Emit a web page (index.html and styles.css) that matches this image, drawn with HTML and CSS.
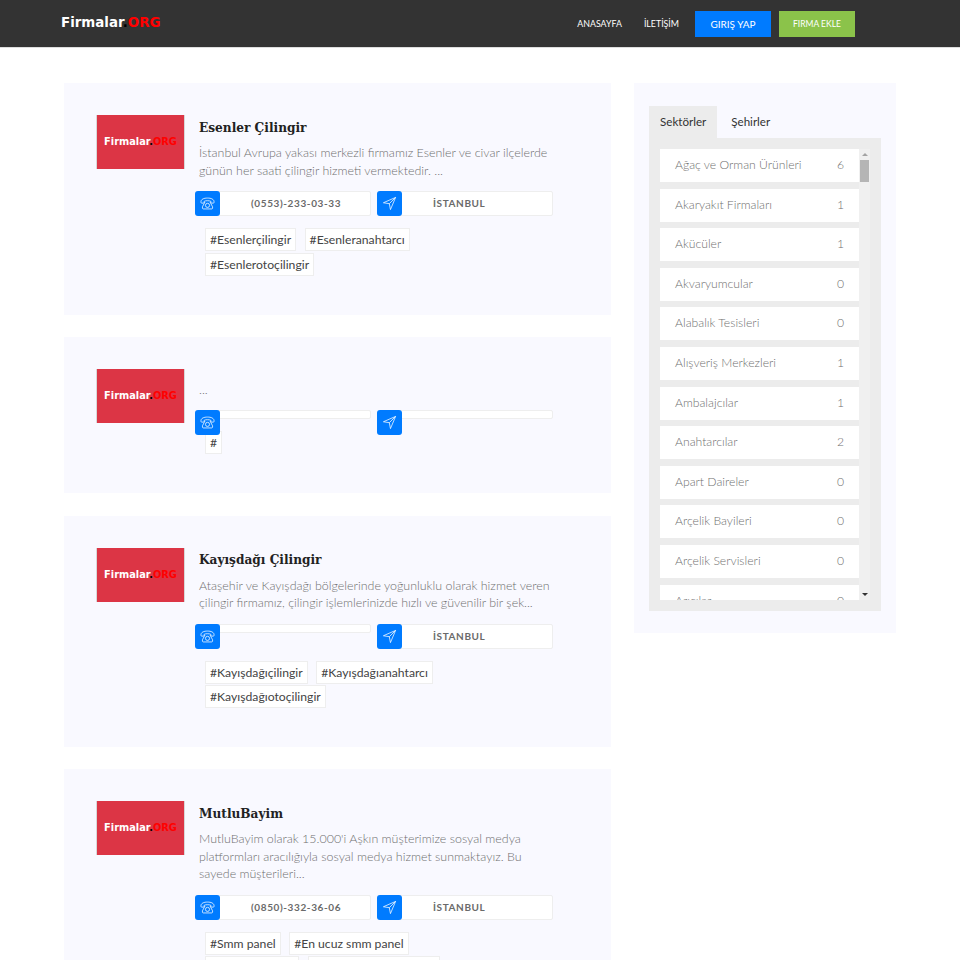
FILE: index.html
```html
<!DOCTYPE html>
<html>
<head>
    <meta charset="UTF-8">
    <title>Firmalar.ORG</title>
    <link rel="stylesheet" href="styles.css">
</head>
<body>
    <svg class="icon-defs" width="0" height="0">
        <symbol id="icon-phone" viewBox="0 0 16 16">
            <path d="M1 6.200C1 3.400 4.200 2.200 8 2.200s7 1.200 7 4v.6c0 .5-.4.8-.9.8h-1.600c-.5 0-.9-.3-.9-.8V5.700c-1-.5-2.300-.7-3.600-.7s-2.600.2-3.600.7v1.100c0 .5-.4.8-.9.8H1.900c-.5 0-.9-.3-.9-.8z"/>
            <path d="M5.300 6.400 2.600 11.500v1.300c0 .6.400 1 1 1h8.800c.6 0 1-.4 1-1v-1.300l-2.700-5.100"/>
            <circle cx="8" cy="10" r="2.200"/>
        </symbol>
        <symbol id="icon-nav" viewBox="0 0 16 16">
            <path d="M14.500 1.500 1.500 7.200l6.300 1 1.200 6.300z"/>
            <path d="M14.500 1.500 7.800 8.200"/>
        </symbol>
    </svg>

    <header class="topbar">
        <a class="brand">Firmalar<span class="dot">.</span><span class="org">ORG</span></a>
        <nav class="topnav">
            <a class="nav-link">ANASAYFA</a>
            <a class="nav-link">İLETİŞİM</a>
            <a class="nav-btn btn-blue">GIRIŞ YAP</a>
            <a class="nav-btn btn-green">FIRMA EKLE</a>
        </nav>
    </header>

    <main class="page">
        <section class="results">

            <!-- Esenler -->
            <article class="card">
                <div class="thumb">Firmalar<span class="dot">.</span><span class="org">ORG</span></div>
                <div class="card-body">
                    <h3 class="card-title">Esenler Çilingir</h3>
                    <p class="card-text">İstanbul Avrupa yakası merkezli firmamız Esenler ve civar ilçelerde günün her saati çilingir hizmeti vermektedir. ...</p>
                    <div class="info-row">
                        <div class="info"><svg class="info-icon"><use href="#icon-phone"/></svg>(0553)-233-03-33</div>
                        <div class="info"><svg class="info-icon"><use href="#icon-nav"/></svg>İSTANBUL</div>
                    </div>
                    <div class="tags">
                        <a class="tag">#Esenlerçilingir</a>
                        <a class="tag">#Esenleranahtarcı</a>
                        <a class="tag">#Esenlerotoçilingir</a>
                    </div>
                </div>
            </article>

            <!-- Bos kayit -->
            <article class="card">
                <div class="thumb">Firmalar<span class="dot">.</span><span class="org">ORG</span></div>
                <div class="card-body">
                    <h3 class="card-title"></h3>
                    <p class="card-text">...</p>
                    <div class="info-row">
                        <div class="info"><svg class="info-icon"><use href="#icon-phone"/></svg></div>
                        <div class="info"><svg class="info-icon"><use href="#icon-nav"/></svg></div>
                    </div>
                    <div class="tags">
                        <a class="tag">#</a>
                    </div>
                </div>
            </article>

            <!-- Kayisdagi -->
            <article class="card">
                <div class="thumb">Firmalar<span class="dot">.</span><span class="org">ORG</span></div>
                <div class="card-body">
                    <h3 class="card-title">Kayışdağı Çilingir</h3>
                    <p class="card-text">Ataşehir ve Kayışdağı bölgelerinde yoğunluklu olarak hizmet veren çilingir firmamız, çilingir işlemlerinizde hızlı ve güvenilir bir şek...</p>
                    <div class="info-row">
                        <div class="info"><svg class="info-icon"><use href="#icon-phone"/></svg></div>
                        <div class="info"><svg class="info-icon"><use href="#icon-nav"/></svg>İSTANBUL</div>
                    </div>
                    <div class="tags">
                        <a class="tag">#Kayışdağıçilingir</a>
                        <a class="tag">#Kayışdağıanahtarcı</a>
                        <a class="tag">#Kayışdağıotoçilingir</a>
                    </div>
                </div>
            </article>

            <!-- MutluBayim -->
            <article class="card">
                <div class="thumb">Firmalar<span class="dot">.</span><span class="org">ORG</span></div>
                <div class="card-body">
                    <h3 class="card-title">MutluBayim</h3>
                    <p class="card-text">MutluBayim olarak 15.000'i Aşkın müşterimize sosyal medya platformları aracılığıyla sosyal medya hizmet sunmaktayız. Bu sayede müşterileri...</p>
                    <div class="info-row">
                        <div class="info"><svg class="info-icon"><use href="#icon-phone"/></svg>(0850)-332-36-06</div>
                        <div class="info"><svg class="info-icon"><use href="#icon-nav"/></svg>İSTANBUL</div>
                    </div>
                    <div class="tags">
                        <a class="tag">#Smm panel</a>
                        <a class="tag">#En ucuz smm panel</a>
                        <a class="tag">#Takipçi satın al</a>
                        <a class="tag">#Sosyal medya hizmeti</a>
                    </div>
                </div>
            </article>
        </section>

        <aside class="sidebar">
            <div class="tabs">
                <a class="tab active">Sektörler</a>
                <a class="tab">Şehirler</a>
            </div>
            <div class="tab-panel">
                <ul class="sector-list">
                    <li class="sector">Ağaç ve Orman Ürünleri<span>6</span></li>
                    <li class="sector">Akaryakıt Firmaları<span>1</span></li>
                    <li class="sector">Akücüler<span>1</span></li>
                    <li class="sector">Akvaryumcular<span>0</span></li>
                    <li class="sector">Alabalık Tesisleri<span>0</span></li>
                    <li class="sector">Alışveriş Merkezleri<span>1</span></li>
                    <li class="sector">Ambalajcılar<span>1</span></li>
                    <li class="sector">Anahtarcılar<span>2</span></li>
                    <li class="sector">Apart Daireler<span>0</span></li>
                    <li class="sector">Arçelik Bayileri<span>0</span></li>
                    <li class="sector">Arçelik Servisleri<span>0</span></li>
                    <li class="sector">Arıcılar<span>0</span></li>
                </ul>
                <div class="scrollbar">
                    <span class="arrow arrow-up"></span>
                    <span class="thumb-bar"></span>
                    <span class="arrow arrow-down"></span>
                </div>
            </div>
        </aside>
    </main>
</body>
</html>
```

FILE: styles.css
```css
* {
    box-sizing: border-box;
}

html, body {
    height: 960px;
    overflow: hidden;
}

body {
    margin: 0;
    font-family: Lato, Arial, sans-serif;
    font-weight: 300;
    color: #777;
    background-color: #fff;
}

.icon-defs {
    position: absolute;
}

/* Ust menu */
.topbar {
    height: 48px;
    display: flex;
    justify-content: space-between;
    padding: 11px 105px 0 61px;
    background-color: #333;
    border-bottom: 1px solid #ddd;
}

.brand {
    font-family: "DejaVu Sans", sans-serif;
    font-weight: bold;
    font-size: 13.4px;
    line-height: 24px;
    color: #fff;
}

.dot { color: #000; }
.org { color: #f00; }

.topnav {
    display: flex;
    align-items: flex-start;
}

.nav-link {
    margin-right: 22px;
    font-size: 8.8px;
    font-weight: 400;
    line-height: 26px;
    color: #fff;
}

.nav-btn {
    width: 76px;
    height: 26px;
    font-size: 8.5px;
    font-weight: 400;
    line-height: 26px;
    text-align: center;
    color: #fff;
}

.btn-blue {
    background-color: #007bff;
    margin-left: -6px;
    margin-right: 8px;
    font-size: 10px;
}

.btn-green {
    background-color: #8bc34a;
}

/* Sayfa */
.page {
    display: flex;
    align-items: flex-start;
    gap: 23px;
    padding: 35px 64px 0;
}

.results {
    width: 547px;
    flex-shrink: 0;
    display: flex;
    flex-direction: column;
    gap: 22.3px;
}

.card {
    display: flex;
    gap: 10px;
    padding: 32px 58px 39px 32px;
    background-color: #f9f9ff;
}

.thumb {
    width: 89px;
    height: 54px;
    flex-shrink: 0;
    font-family: "DejaVu Sans", sans-serif;
    font-weight: bold;
    font-size: 9.8px;
    line-height: 54px;
    text-align: center;
    color: #fff;
    background-color: #dc3545;
    border-left: 1px solid #d8d8d8;
    border-right: 1px solid #d8d8d8;
}

.card-body {
    flex: 1;
    min-width: 0;
    display: flex;
    flex-direction: column;
}

.card-title {
    margin: 3.5px 0 8.5px 4px;
    font-family: "DejaVu Serif Condensed", "DejaVu Serif", serif;
    font-size: 13.5px;
    font-weight: bold;
    line-height: 17px;
    color: #222;
}

.card-text {
    margin: 0 0 12px 4px;
    font-size: 12.45px;
    line-height: 17.5px;
    color: #6f6f6f;
}

.info-row {
    display: flex;
    align-items: flex-start;
    gap: 6px;
}

.info {
    position: relative;
    flex: 1;
    min-height: 9px;
    padding: 3px 0 4px 55px;
    font-size: 10px;
    font-weight: 700;
    line-height: 16px;
    letter-spacing: 0.6px;
    color: #6a6a6a;
    background-color: #fff;
    border: 1px solid #eee;
    border-radius: 2px;
}

.info-icon {
    position: absolute;
    left: -1px;
    top: -1px;
    width: 25px;
    height: 25px;
    padding: 5px;
    fill: none;
    stroke: #fff;
    stroke-width: 0.8;
    background-color: #007bff;
    border-radius: 3px;
}

.tags {
    display: flex;
    flex-wrap: wrap;
    gap: 1.5px 8.5px;
    max-width: 300px;
    margin: 12px 0 0 10px;
}

.tag {
    height: 23px;
    padding: 0 4px;
    font-size: 12.2px;
    font-weight: 400;
    line-height: 22px;
    color: #444;
    background-color: #fff;
    border: 1px solid #eee;
}

/* Sag panel */
.sidebar {
    width: 262px;
    height: 550px;
    flex-shrink: 0;
    padding: 23px 15px;
    background-color: #f9f9ff;
}

.tabs {
    display: flex;
    height: 32px;
}

.tab {
    padding: 0 11px;
    margin-right: 3px;
    font-size: 11.6px;
    font-weight: 400;
    line-height: 32px;
    color: #333;
}

.tab.active {
    background-color: #ececec;
}

.tab-panel {
    display: flex;
    height: 473px;
    padding: 11px;
    background-color: #ececec;
}

.sector-list {
    width: 199px;
    margin: 0;
    padding: 0;
    overflow: hidden;
    list-style: none;
}

.sector {
    display: flex;
    justify-content: space-between;
    height: 33px;
    margin-bottom: 6.6px;
    padding: 0 15px;
    font-size: 12.2px;
    line-height: 31.5px;
    color: #6f6f6f;
    background-color: #fff;
}

.scrollbar {
    width: 11px;
    display: flex;
    flex-direction: column;
    align-items: center;
    background-color: #f0f0f0;
}

.arrow {
    width: 0;
    height: 0;
    margin: 4px 0;
    border-left: 3px solid transparent;
    border-right: 3px solid transparent;
}

.arrow-up {
    border-bottom: 3px solid #a3a3a3;
}

.arrow-down {
    margin-top: auto;
    border-top: 3px solid #333;
}

.thumb-bar {
    width: 9px;
    height: 22px;
    background-color: #b5b5b5;
}
```
